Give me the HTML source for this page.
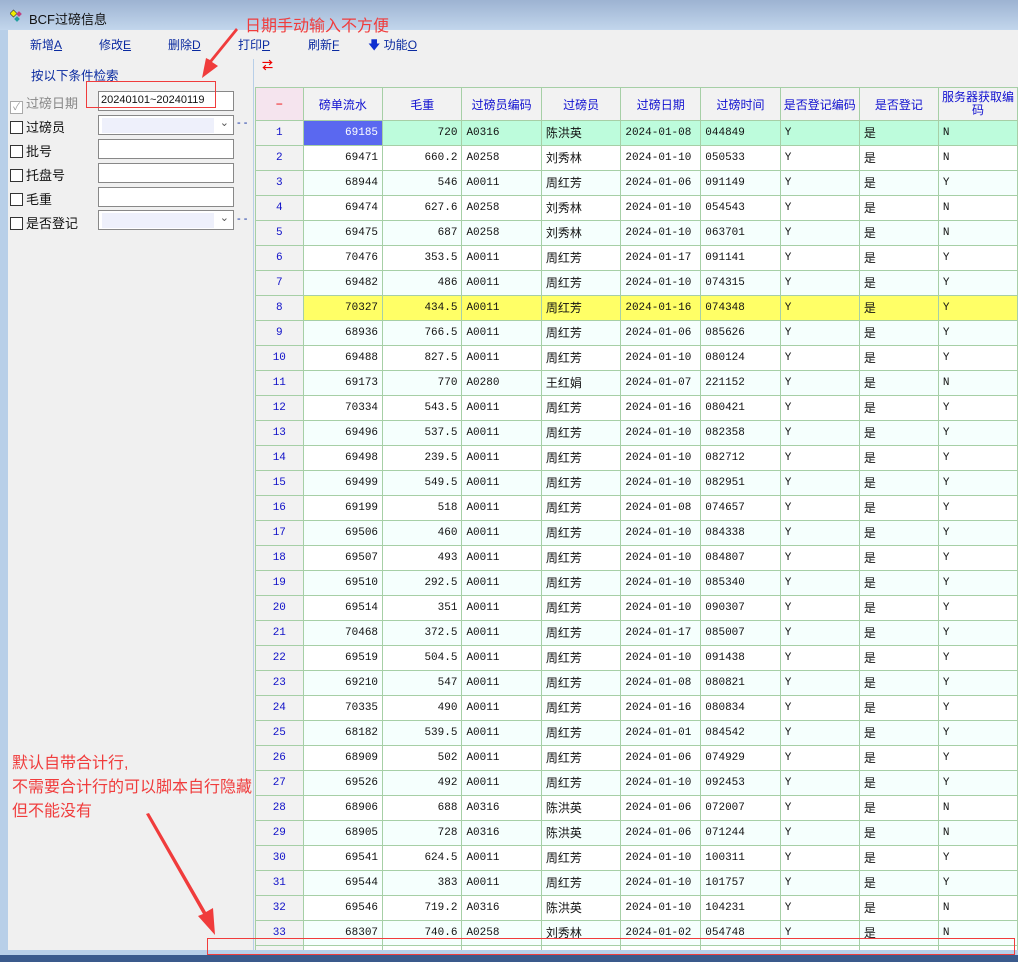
<!DOCTYPE html>
<html><head><meta charset="utf-8"><style>
*{margin:0;padding:0;box-sizing:border-box}
html,body{width:1018px;height:962px;overflow:hidden}
body{background:#f0f0f0;font-family:"Liberation Sans","Noto Sans CJK SC",sans-serif;position:relative}
.abs{position:absolute}
.title{left:0;top:0;width:1018px;height:30px;background:linear-gradient(#9db3d2,#c2d6ec)}
.lb{left:0;top:30px;width:8px;height:925px;background:#b8cfe8}
.bot{left:0;top:950px;width:1018px;height:6px;background:#b8cfe8;z-index:5}
.bot2{left:0;top:955px;width:1018px;height:7px;background:#3a5a8c;z-index:5}
.tb{top:36px;font-size:12px;color:#0a2aa0}
.lbl{font-size:13px;color:#111;left:10px}
.cb{display:inline-block;width:13px;height:13px;border:1px solid #333;background:#fff;vertical-align:-2px;margin-right:3px}
.inp{left:98px;width:136px;height:20px;background:#fff;border:1px solid #888}
.combo{background:#fff}
.combo i{position:absolute;left:3px;top:2px;width:112px;height:15px;background:#eef0fb}
.dots{color:#0a2aa0;font-size:11px}
table{position:absolute;left:255px;top:87px;border-collapse:collapse;table-layout:fixed;font-family:"Liberation Mono","Noto Sans CJK SC",monospace;font-size:11px}
td{border:1px solid #a6cfa6;height:25px;padding:0 4px;white-space:nowrap;overflow:hidden;color:#111;background:#fff;line-height:14px;vertical-align:middle}
th{border:1px solid #a6cfa6;height:33px;background:#f2f2f2;color:#1010d0;font-weight:normal;font-family:"Liberation Sans","Noto Sans CJK SC",sans-serif;font-size:12px}
td:nth-child(2),td:nth-child(3){text-align:right}
td:nth-child(5),td:nth-child(9){font-family:"Liberation Sans","Noto Sans CJK SC",sans-serif;font-size:12px}
tr:nth-child(even) td{background:#f5fffd}
tr.g td{background:#bdfcdc}
tr.y td{background:#ffff66}
table tr td.n{background:#f2f2f2;color:#1010c8;text-align:center}
tr.g td.sel{background:#5a68f0;color:#fff}
.red{color:#f03c3c;font-family:"Liberation Sans","Noto Sans CJK SC",sans-serif}
</style></head><body>
<div class="abs title"></div>
<div class="abs" style="left:10px;top:9px;width:14px;height:14px"><svg width="14" height="14"><rect x="1" y="2" width="5" height="5" fill="#ee0" stroke="#333" stroke-width=".6" transform="rotate(45 3.5 4.5)"/><rect x="7" y="3" width="4" height="4" fill="#c04080" transform="rotate(45 9 5)"/><rect x="5" y="8" width="4" height="4" fill="#20a0a0" transform="rotate(45 7 10)"/></svg></div>
<div class="abs" style="left:29px;top:9px;font-size:13px;color:#111">BCF过磅信息</div>
<div class="abs lb"></div>
<div class="abs tb" style="left:30px">新增<u>A</u></div>
<div class="abs tb" style="left:99px">修改<u>E</u></div>
<div class="abs tb" style="left:168px">删除<u>D</u></div>
<div class="abs tb" style="left:238px">打印<u>P</u></div>
<div class="abs tb" style="left:308px">刷新<u>F</u></div>
<div class="abs tb" style="left:368px"><span style="color:#1030d0">&#129095;</span> 功能<u>O</u></div>
<div class="abs" style="left:31px;top:65px;font-size:12.5px;color:#0a2aa0">按以下条件检索</div>
<div class="abs lbl" style="top:93px;color:#888"><span class="cb" style="border-color:#aaa;text-align:center;font-size:10px;line-height:11px;color:#999">✓</span>过磅日期</div>
<div class="abs inp" style="top:91px;font-size:11px;padding:2px 0 0 2px;color:#111">20240101~20240119</div>
<div class="abs lbl" style="top:117px"><span class="cb"></span>过磅员</div>
<div class="abs inp combo" style="top:115px"><i></i><span style="position:absolute;right:4px;top:0;font-size:11px;color:#555">&#8964;</span></div>
<div class="abs dots" style="left:237px;top:117px">- -</div>
<div class="abs lbl" style="top:141px"><span class="cb"></span>批号</div>
<div class="abs inp" style="top:139px"></div>
<div class="abs lbl" style="top:165px"><span class="cb"></span>托盘号</div>
<div class="abs inp" style="top:163px"></div>
<div class="abs lbl" style="top:189px"><span class="cb"></span>毛重</div>
<div class="abs inp" style="top:187px"></div>
<div class="abs lbl" style="top:213px"><span class="cb"></span>是否登记</div>
<div class="abs inp combo" style="top:210px"><i></i><span style="position:absolute;right:4px;top:0;font-size:11px;color:#555">&#8964;</span></div>
<div class="abs dots" style="left:237px;top:213px">- -</div>
<div class="abs" style="left:253px;top:59px;width:1px;height:891px;background:#b8cfe8"></div>
<div class="abs" style="left:262px;top:64px;font-size:11px;line-height:5px;font-weight:bold"><span style="color:#e00">⇄</span></div>
<table>
<colgroup><col style="width:48px"><col style="width:80px"><col style="width:80px"><col style="width:80px"><col style="width:80px"><col style="width:80px"><col style="width:80px"><col style="width:80px"><col style="width:80px"><col style="width:80px"></colgroup>
<tr><th style="background:#f5e4ee;color:#e00">−</th><th>磅单流水</th><th>毛重</th><th>过磅员编码</th><th>过磅员</th><th>过磅日期</th><th>过磅时间</th><th>是否登记编码</th><th>是否登记</th><th style="line-height:13px">服务器获取编码</th></tr>
<tr class="g"><td class="n">1</td><td class="sel">69185</td><td>720</td><td>A0316</td><td>陈洪英</td><td>2024-01-08</td><td>044849</td><td>Y</td><td>是</td><td>N</td></tr>
<tr><td class="n">2</td><td>69471</td><td>660.2</td><td>A0258</td><td>刘秀林</td><td>2024-01-10</td><td>050533</td><td>Y</td><td>是</td><td>N</td></tr>
<tr><td class="n">3</td><td>68944</td><td>546</td><td>A0011</td><td>周红芳</td><td>2024-01-06</td><td>091149</td><td>Y</td><td>是</td><td>Y</td></tr>
<tr><td class="n">4</td><td>69474</td><td>627.6</td><td>A0258</td><td>刘秀林</td><td>2024-01-10</td><td>054543</td><td>Y</td><td>是</td><td>N</td></tr>
<tr><td class="n">5</td><td>69475</td><td>687</td><td>A0258</td><td>刘秀林</td><td>2024-01-10</td><td>063701</td><td>Y</td><td>是</td><td>N</td></tr>
<tr><td class="n">6</td><td>70476</td><td>353.5</td><td>A0011</td><td>周红芳</td><td>2024-01-17</td><td>091141</td><td>Y</td><td>是</td><td>Y</td></tr>
<tr><td class="n">7</td><td>69482</td><td>486</td><td>A0011</td><td>周红芳</td><td>2024-01-10</td><td>074315</td><td>Y</td><td>是</td><td>Y</td></tr>
<tr class="y"><td class="n">8</td><td>70327</td><td>434.5</td><td>A0011</td><td>周红芳</td><td>2024-01-16</td><td>074348</td><td>Y</td><td>是</td><td>Y</td></tr>
<tr><td class="n">9</td><td>68936</td><td>766.5</td><td>A0011</td><td>周红芳</td><td>2024-01-06</td><td>085626</td><td>Y</td><td>是</td><td>Y</td></tr>
<tr><td class="n">10</td><td>69488</td><td>827.5</td><td>A0011</td><td>周红芳</td><td>2024-01-10</td><td>080124</td><td>Y</td><td>是</td><td>Y</td></tr>
<tr><td class="n">11</td><td>69173</td><td>770</td><td>A0280</td><td>王红娟</td><td>2024-01-07</td><td>221152</td><td>Y</td><td>是</td><td>N</td></tr>
<tr><td class="n">12</td><td>70334</td><td>543.5</td><td>A0011</td><td>周红芳</td><td>2024-01-16</td><td>080421</td><td>Y</td><td>是</td><td>Y</td></tr>
<tr><td class="n">13</td><td>69496</td><td>537.5</td><td>A0011</td><td>周红芳</td><td>2024-01-10</td><td>082358</td><td>Y</td><td>是</td><td>Y</td></tr>
<tr><td class="n">14</td><td>69498</td><td>239.5</td><td>A0011</td><td>周红芳</td><td>2024-01-10</td><td>082712</td><td>Y</td><td>是</td><td>Y</td></tr>
<tr><td class="n">15</td><td>69499</td><td>549.5</td><td>A0011</td><td>周红芳</td><td>2024-01-10</td><td>082951</td><td>Y</td><td>是</td><td>Y</td></tr>
<tr><td class="n">16</td><td>69199</td><td>518</td><td>A0011</td><td>周红芳</td><td>2024-01-08</td><td>074657</td><td>Y</td><td>是</td><td>Y</td></tr>
<tr><td class="n">17</td><td>69506</td><td>460</td><td>A0011</td><td>周红芳</td><td>2024-01-10</td><td>084338</td><td>Y</td><td>是</td><td>Y</td></tr>
<tr><td class="n">18</td><td>69507</td><td>493</td><td>A0011</td><td>周红芳</td><td>2024-01-10</td><td>084807</td><td>Y</td><td>是</td><td>Y</td></tr>
<tr><td class="n">19</td><td>69510</td><td>292.5</td><td>A0011</td><td>周红芳</td><td>2024-01-10</td><td>085340</td><td>Y</td><td>是</td><td>Y</td></tr>
<tr><td class="n">20</td><td>69514</td><td>351</td><td>A0011</td><td>周红芳</td><td>2024-01-10</td><td>090307</td><td>Y</td><td>是</td><td>Y</td></tr>
<tr><td class="n">21</td><td>70468</td><td>372.5</td><td>A0011</td><td>周红芳</td><td>2024-01-17</td><td>085007</td><td>Y</td><td>是</td><td>Y</td></tr>
<tr><td class="n">22</td><td>69519</td><td>504.5</td><td>A0011</td><td>周红芳</td><td>2024-01-10</td><td>091438</td><td>Y</td><td>是</td><td>Y</td></tr>
<tr><td class="n">23</td><td>69210</td><td>547</td><td>A0011</td><td>周红芳</td><td>2024-01-08</td><td>080821</td><td>Y</td><td>是</td><td>Y</td></tr>
<tr><td class="n">24</td><td>70335</td><td>490</td><td>A0011</td><td>周红芳</td><td>2024-01-16</td><td>080834</td><td>Y</td><td>是</td><td>Y</td></tr>
<tr><td class="n">25</td><td>68182</td><td>539.5</td><td>A0011</td><td>周红芳</td><td>2024-01-01</td><td>084542</td><td>Y</td><td>是</td><td>Y</td></tr>
<tr><td class="n">26</td><td>68909</td><td>502</td><td>A0011</td><td>周红芳</td><td>2024-01-06</td><td>074929</td><td>Y</td><td>是</td><td>Y</td></tr>
<tr><td class="n">27</td><td>69526</td><td>492</td><td>A0011</td><td>周红芳</td><td>2024-01-10</td><td>092453</td><td>Y</td><td>是</td><td>Y</td></tr>
<tr><td class="n">28</td><td>68906</td><td>688</td><td>A0316</td><td>陈洪英</td><td>2024-01-06</td><td>072007</td><td>Y</td><td>是</td><td>N</td></tr>
<tr><td class="n">29</td><td>68905</td><td>728</td><td>A0316</td><td>陈洪英</td><td>2024-01-06</td><td>071244</td><td>Y</td><td>是</td><td>N</td></tr>
<tr><td class="n">30</td><td>69541</td><td>624.5</td><td>A0011</td><td>周红芳</td><td>2024-01-10</td><td>100311</td><td>Y</td><td>是</td><td>Y</td></tr>
<tr><td class="n">31</td><td>69544</td><td>383</td><td>A0011</td><td>周红芳</td><td>2024-01-10</td><td>101757</td><td>Y</td><td>是</td><td>Y</td></tr>
<tr><td class="n">32</td><td>69546</td><td>719.2</td><td>A0316</td><td>陈洪英</td><td>2024-01-10</td><td>104231</td><td>Y</td><td>是</td><td>N</td></tr>
<tr><td class="n">33</td><td>68307</td><td>740.6</td><td>A0258</td><td>刘秀林</td><td>2024-01-02</td><td>054748</td><td>Y</td><td>是</td><td>N</td></tr>
<tr><td class="n" style="height:8px"></td><td style="height:8px"></td><td></td><td></td><td></td><td></td><td></td><td></td><td></td><td></td></tr>
</table>
<div class="abs bot"></div>
<div class="abs bot2"></div>
<div class="abs red" style="left:245px;top:12px;font-size:16px">日期手动输入不方便</div>
<div class="abs" style="left:86px;top:81px;width:130px;height:27px;border:1px solid #f03c3c"></div>
<div class="abs red" style="left:12px;top:752px;font-size:16px;line-height:24px;white-space:nowrap">默认自带合计行,<br>不需要合计行的可以脚本自行隐藏<br>但不能没有</div>
<div class="abs" style="left:207px;top:938px;width:808px;height:17px;border:1px solid #f03c3c;z-index:6"></div>
<svg class="abs" style="left:0;top:0" width="1018" height="962"><polygon points="236,28 238,30 212,62 218,66 202,78 206,58 210,60" fill="#f03c3c"/><polygon points="146,814 149,813 206,912 213,908 215,935 198,916 203,914" fill="#f03c3c"/></svg>
</body></html>
